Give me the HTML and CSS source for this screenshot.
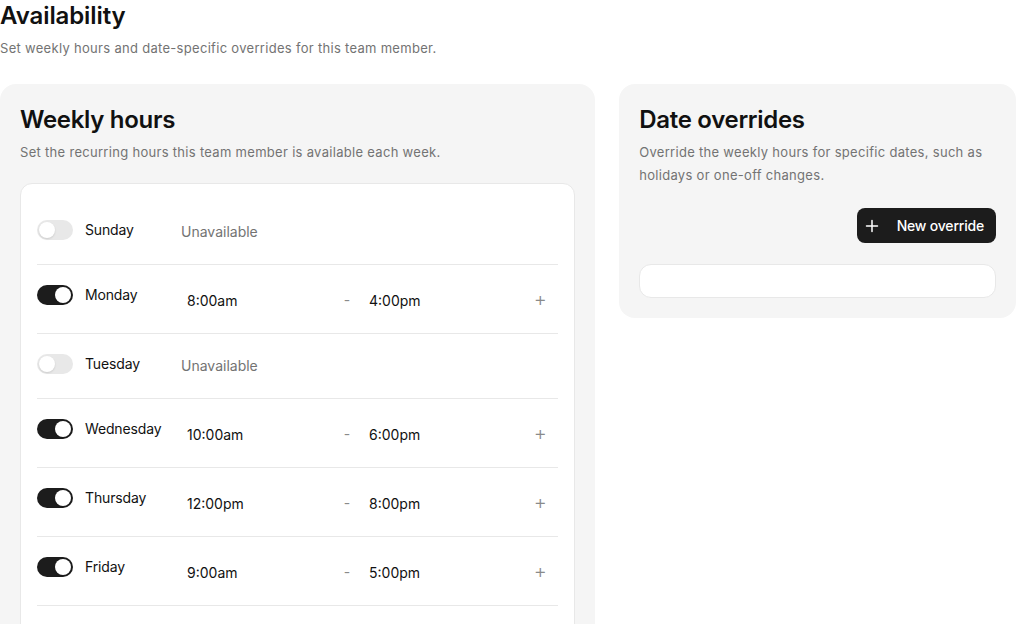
FILE: index.html
```html
<!DOCTYPE html>
<html lang="en">
<head>
  <meta charset="UTF-8" />
  <meta name="viewport" content="width=device-width, initial-scale=1.0"/>
  <title>Availability</title>
  <link rel="stylesheet" href="styles.css">
</head>
<body>
  <header class="page-head">
    <h1>Availability</h1>
    <p>Set weekly hours and date-specific overrides for this team member.</p>
  </header>

  <div class="layout">
    <section class="card">
      <h2>Weekly hours</h2>
      <p class="card-desc">Set the recurring hours this team member is available each week.</p>

      <div class="panel days">
        <div class="day">
          <label class="day-name"><span class="toggle"></span>Sunday</label>
          <div class="off-text">Unavailable</div>
        </div>
        <div class="day">
          <label class="day-name"><span class="toggle on"></span>Monday</label>
          <div class="times">
            <input class="time" value="8:00am" />
            <span class="dash">-</span>
            <input class="time" value="4:00pm" />
            <button class="add" aria-label="Add hours">+</button>
          </div>
        </div>
        <div class="day">
          <label class="day-name"><span class="toggle"></span>Tuesday</label>
          <div class="off-text">Unavailable</div>
        </div>
        <div class="day">
          <label class="day-name"><span class="toggle on"></span>Wednesday</label>
          <div class="times">
            <input class="time" value="10:00am" />
            <span class="dash">-</span>
            <input class="time" value="6:00pm" />
            <button class="add" aria-label="Add hours">+</button>
          </div>
        </div>
        <div class="day">
          <label class="day-name"><span class="toggle on"></span>Thursday</label>
          <div class="times">
            <input class="time" value="12:00pm" />
            <span class="dash">-</span>
            <input class="time" value="8:00pm" />
            <button class="add" aria-label="Add hours">+</button>
          </div>
        </div>
        <div class="day">
          <label class="day-name"><span class="toggle on"></span>Friday</label>
          <div class="times">
            <input class="time" value="9:00am" />
            <span class="dash">-</span>
            <input class="time" value="5:00pm" />
            <button class="add" aria-label="Add hours">+</button>
          </div>
        </div>
        <div class="day">
          <label class="day-name"><span class="toggle"></span>Saturday</label>
          <div class="off-text">Unavailable</div>
        </div>
      </div>
    </section>

    <section class="card overrides">
      <h2>Date overrides</h2>
      <p class="card-desc">Override the weekly hours for specific dates, such as holidays or one-off changes.</p>
      <div class="actions">
        <button class="btn-dark">
          <svg width="14" height="14" viewBox="0 0 14 14" fill="none" stroke="currentColor" stroke-width="1.5" stroke-linecap="round"><path d="M7 1.5v11M1.5 7h11"/></svg>
          New override
        </button>
      </div>
      <div class="panel empty"></div>
    </section>
  </div>
</body>
</html>
```

FILE: styles.css
```css
* { box-sizing: border-box; }
body { margin: 0; font-family: Inter, "Noto Sans", sans-serif; color: #111; background: #fff; }

.page-head h1 { margin: 0; font-size: 24px; line-height: 32px; font-weight: 600; letter-spacing: -0.1px; }
.page-head p { margin: 4px 0 0; font-size: 13px; line-height: 24px; color: #737373; letter-spacing: 0.3px; }

.layout { display: grid; grid-template-columns: 3fr 2fr; gap: 24px; margin-top: 24px; align-items: start; }

.card { background: #f5f5f5; border-radius: 16px; padding: 21px 20px 20px; }
.card h2 { margin: 0; font-size: 24px; line-height: 30px; font-weight: 600; letter-spacing: -0.3px; }
.card-desc { margin: 6px 0 0; font-size: 13px; line-height: 23px; color: #737373; letter-spacing: 0.3px; }

.panel { background: #fff; border: 1px solid #e8e8e8; border-radius: 12px; margin-top: 19px; }
.days { padding: 0 16px 0; }

.day { display: flex; align-items: flex-start; padding: 16px 0; border-bottom: 1px solid #e8e8e8; }
.day:first-child { padding-top: 32px; }
.day-name { display: flex; align-items: center; gap: 12px; width: 144px; padding-top: 4px; font-size: 14px; line-height: 20px; letter-spacing: -0.15px; }

.toggle { position: relative; width: 36px; height: 20px; border-radius: 10px; background: #e8e8e8; flex: none; }
.toggle::after { content: ""; position: absolute; top: 2px; left: 2px; width: 16px; height: 16px; border-radius: 50%; background: #fff; box-shadow: 0 1px 2px rgba(0,0,0,0.12); }
.toggle.on { background: #1c1c1c; }
.toggle.on::after { left: 18px; }

.off-text { font-size: 14px; line-height: 32px; color: #737373; }

.times { flex: 1; display: flex; align-items: center; height: 36px; }
.time { width: 150px; height: 36px; border: 0; padding: 3px 6px 0; font: inherit; font-size: 14px; color: #111; background: transparent; outline: none; }
.dash { width: 32px; text-align: center; color: #8a8a8a; font-size: 14px; }
.add { margin-left: auto; width: 36px; height: 36px; border: 0; background: none; color: #8a8a8a; font-size: 20px; font-weight: 300; font-family: inherit; padding: 0; }

.actions { display: flex; justify-content: flex-end; margin-top: 21px; }
.btn-dark { display: flex; align-items: center; gap: 18px; height: 35px; padding: 0 12px 0 8px; border: 0; border-radius: 8px; background: #1c1c1c; color: #fff; font-family: inherit; font-size: 14px; font-weight: 500; letter-spacing: -0.2px; }
.empty { height: 34px; margin-top: 21px; }
```
